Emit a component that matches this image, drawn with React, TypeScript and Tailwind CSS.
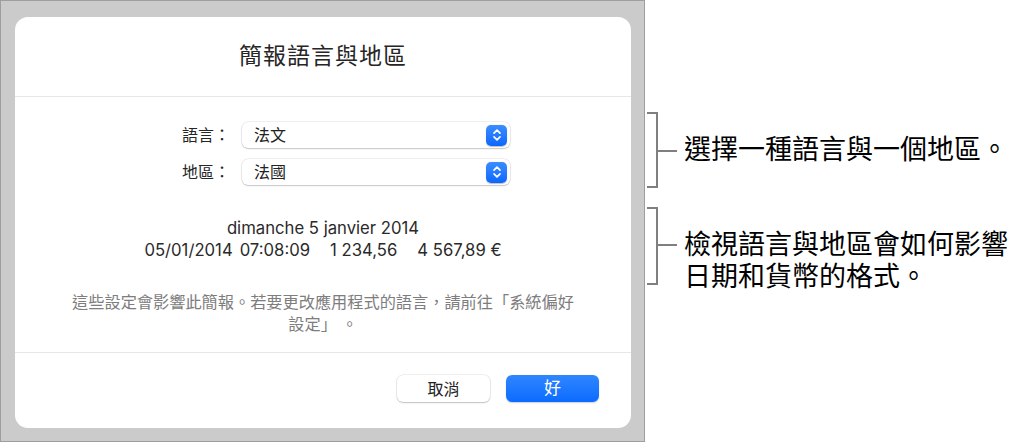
import React from "react";

const FONT = { fontFamily: '"Inter", "Noto Sans CJK TC", sans-serif' };

function Stepper() {
  return (
    <div className="w-[21px] h-[21px] rounded-[5px] bg-gradient-to-b from-[#3b8cff] to-[#0a66ff] flex items-center justify-center shadow-[0_0.5px_1px_rgba(0,0,0,0.25)]">
      <svg width="10" height="14" viewBox="0 0 10 14" fill="none">
        <path d="M2 5.2 L5 2.2 L8 5.2" stroke="white" strokeWidth="1.7" strokeLinecap="round" strokeLinejoin="round" />
        <path d="M2 8.8 L5 11.8 L8 8.8" stroke="white" strokeWidth="1.7" strokeLinecap="round" strokeLinejoin="round" />
      </svg>
    </div>
  );
}

function Popup({ value }: { value: string }) {
  return (
    <div className="w-[268px] h-[26px] rounded-[6px] bg-white flex items-center justify-between pl-[12px] pr-[3px] shadow-[0_0_0_0.5px_rgba(0,0,0,0.12),0_1px_1.5px_rgba(0,0,0,0.18)]">
      <span className="text-[16px] text-[#222]">{value}</span>
      <Stepper />
    </div>
  );
}

function Bracket({ h, tick }: { h: number; tick: number }) {
  return (
    <svg width="32" height={h} viewBox={`0 0 32 ${h}`} className="shrink-0">
      <path
        d={`M1 1 H11 V${h - 1} H1 M11 ${tick} H31`}
        stroke="#7f7f7f"
        strokeWidth="2"
        fill="none"
      />
    </svg>
  );
}

export default function App() {
  return (
    <div className="w-[1025px] h-[443px] bg-white flex" style={FONT}>
      <div className="w-[645px] h-[442px] bg-[#cbcbcb] border border-[#9e9e9e] pt-[16px] pl-[14px] shrink-0">
        <div className="w-[616px] h-[411px] bg-white rounded-[13px] flex flex-col">
          <div className="h-[80px] shrink-0 flex items-center justify-center border-b border-[#e6e6e6]">
            <span className="text-[23px] text-[#262626] tracking-[1px]">簡報語言與地區</span>
          </div>
          <div className="flex flex-col pt-[25px] pl-[167px] gap-[11px]">
            <div className="flex items-center">
              <span className="text-[16px] text-[#262626] w-[60px]">語言：</span>
              <Popup value="法文" />
            </div>
            <div className="flex items-center">
              <span className="text-[16px] text-[#262626] w-[60px]">地區：</span>
              <Popup value="法國" />
            </div>
          </div>
          <div className="flex flex-col items-center pt-[32px] text-[16.7px] leading-[22px] text-[#2a2a2a]">
            <span>dimanche 5 janvier 2014</span>
            <div className="flex whitespace-pre">
              <span>05/01/2014</span>
              <span className="ml-[7px]">07:08:09</span>
              <span className="ml-[20px]">1 234,56</span>
              <span className="ml-[20px]">4 567,89 €</span>
            </div>
          </div>
          <div className="flex flex-col items-center shrink-0 pt-[30px] text-[16.2px] leading-[22px] text-[#7d7d7d] h-[92px] border-b border-[#e6e6e6]">
            <span>這些設定會影響此簡報。若要更改應用程式的語言，請前往「系統偏好</span>
            <span className="whitespace-pre">設定」 。</span>
          </div>
          <div className="flex justify-end gap-[16px] pr-[32px] pt-[22px]">
            <button className="w-[93px] h-[27px] rounded-[6px] bg-white text-[16px] text-[#222] shadow-[0_0_0_0.5px_rgba(0,0,0,0.12),0_1px_1.5px_rgba(0,0,0,0.2)]">
              取消
            </button>
            <button className="w-[93px] h-[27px] rounded-[6px] bg-gradient-to-b from-[#2f86ff] to-[#0a6bff] text-[17px] text-white shadow-[0_1px_1.5px_rgba(0,0,0,0.2)]">
              好
            </button>
          </div>
        </div>
      </div>
      <div className="flex flex-col pt-[112px] pl-[1px] text-[27px] leading-[32px] text-black">
        <div className="flex items-center">
          <Bracket h={76} tick={39} />
          <span className="ml-[6px]">選擇一種語言與一個地區。</span>
        </div>
        <div className="flex items-start mt-[19px]">
          <Bracket h={78} tick={38} />
          <div className="ml-[6px] pt-[22px] flex flex-col">
            <span>檢視語言與地區會如何影響</span>
            <span>日期和貨幣的格式。</span>
          </div>
        </div>
      </div>
    </div>
  );
}
